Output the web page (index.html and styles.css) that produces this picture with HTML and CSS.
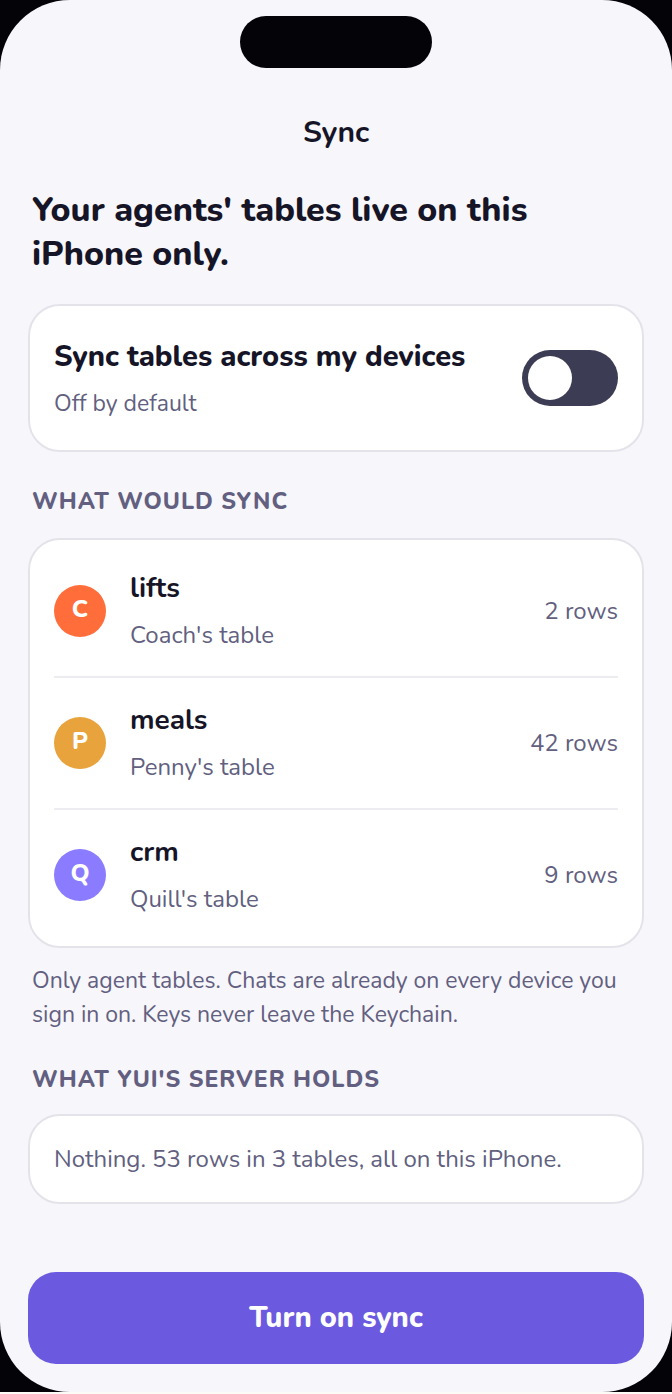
FILE: index.html
```html
<!doctype html>
<html lang="en">
<head>
  <meta charset="utf-8" />
  <meta name="viewport" content="width=device-width,initial-scale=1" />
  <title>Sync</title>
  <link rel="stylesheet" href="styles.css">
</head>
<body>
  <div class="phone">
    <main class="screen">
      <div class="island"></div>
      <h1 class="title">Sync</h1>
      <p class="headline">Your agents' tables live on this iPhone only.</p>

      <div class="card setting">
        <div class="setting-text">
          <label class="setting-name" for="sync">Sync tables across my devices</label>
          <span class="hint" id="sync-hint">Off by default</span>
        </div>
        <input class="toggle" type="checkbox" role="switch" id="sync" aria-describedby="sync-hint">
      </div>

      <h2 class="label">What would sync</h2>
      <ul class="card list">
        <li class="row">
          <span class="avatar coach">C</span>
          <div class="row-text">
            <span class="name">lifts</span>
            <span class="sub">Coach's table</span>
          </div>
          <span class="count">2 rows</span>
        </li>
        <li class="row">
          <span class="avatar penny">P</span>
          <div class="row-text">
            <span class="name">meals</span>
            <span class="sub">Penny's table</span>
          </div>
          <span class="count">42 rows</span>
        </li>
        <li class="row">
          <span class="avatar quill">Q</span>
          <div class="row-text">
            <span class="name">crm</span>
            <span class="sub">Quill's table</span>
          </div>
          <span class="count">9 rows</span>
        </li>
      </ul>
      <p class="note">Only agent tables. Chats are already on every device you sign in on. Keys never leave the Keychain.</p>

      <h2 class="label">What Yui's server holds</h2>
      <div class="card holds">Nothing. 53 rows in 3 tables, all on this iPhone.</div>

      <button class="btn" type="button">Turn on sync</button>
    </main>
  </div>
</body>
</html>
```

FILE: styles.css
```css
:root{
  --bg:#f6f6fb; --card:#fff; --line:#e4e3ea; --ink:#161527; --muted:#625f80; --accent:#6b5ae0; --bezel:#040308;
  font-family:Nunito, Lato, "Noto Sans", sans-serif;
}
*{box-sizing:border-box}
body{margin:0;min-height:100vh;display:flex;flex-direction:column;background:#fdfbf5;color:var(--ink)}
h1,h2,p,ul{margin:0;padding:0}
.phone{flex:1;display:flex;background:var(--bezel);margin-bottom:2px}
.screen{flex:1;display:flex;flex-direction:column;padding:16px 28px 28px;background:var(--bg);border-radius:70px}
.island{width:192px;height:52px;border-radius:26px;background:var(--bezel);align-self:center}
.title{margin-top:44px;font-size:30px;line-height:42px;font-weight:700;text-align:center}
.headline{margin:34px 4px 28px;font-size:34px;line-height:44px;font-weight:800}
.card{background:var(--card);border:2px solid var(--line);border-radius:32px;padding:0 24px}
.setting{display:flex;align-items:center;gap:24px;padding:25px 24px}
.setting-text,.row-text{flex:1;display:flex;flex-direction:column}
.setting-name{font-size:29px;line-height:52px;font-weight:800}
.hint{font-size:23px;line-height:42px;color:var(--muted)}
.toggle{appearance:none;display:flex;width:96px;height:56px;margin:0;padding:6px;border-radius:28px;background:#3d3c55;cursor:pointer}
.toggle::before{content:"";width:44px;height:44px;border-radius:50%;background:#fff}
.toggle:checked{background:var(--accent);justify-content:flex-end}
.label{margin:34px 4px 20px;font-size:23px;line-height:32px;font-weight:800;letter-spacing:1px;text-transform:uppercase;color:var(--muted)}
.list{list-style:none;padding:6px 24px}
.row{display:flex;align-items:center;gap:24px;padding:18px 0}
.row + .row{border-top:2px solid #ededf1}
.avatar{width:52px;height:52px;border-radius:50%;color:#fff;font-size:24px;line-height:48px;font-weight:800;text-align:center}
.coach{background:#ff6d3b}
.penny{background:#e8a33d}
.quill{background:#8b7cff}
.name{font-size:28px;line-height:48px;font-weight:700}
.sub{font-size:24px;line-height:46px;color:var(--muted)}
.count{font-size:24px;color:var(--muted)}
.note{margin:16px 4px 0;font-size:23px;line-height:34px;color:var(--muted)}
.note + .label{margin:32px 4px 18px}
.holds{padding:24px;font-size:24px;line-height:38px;color:var(--muted)}
.btn{margin-top:auto;padding:24px;border:none;border-radius:28px;background:var(--accent);color:#fff;font:inherit;font-size:29px;line-height:44px;font-weight:800;cursor:pointer}
```
